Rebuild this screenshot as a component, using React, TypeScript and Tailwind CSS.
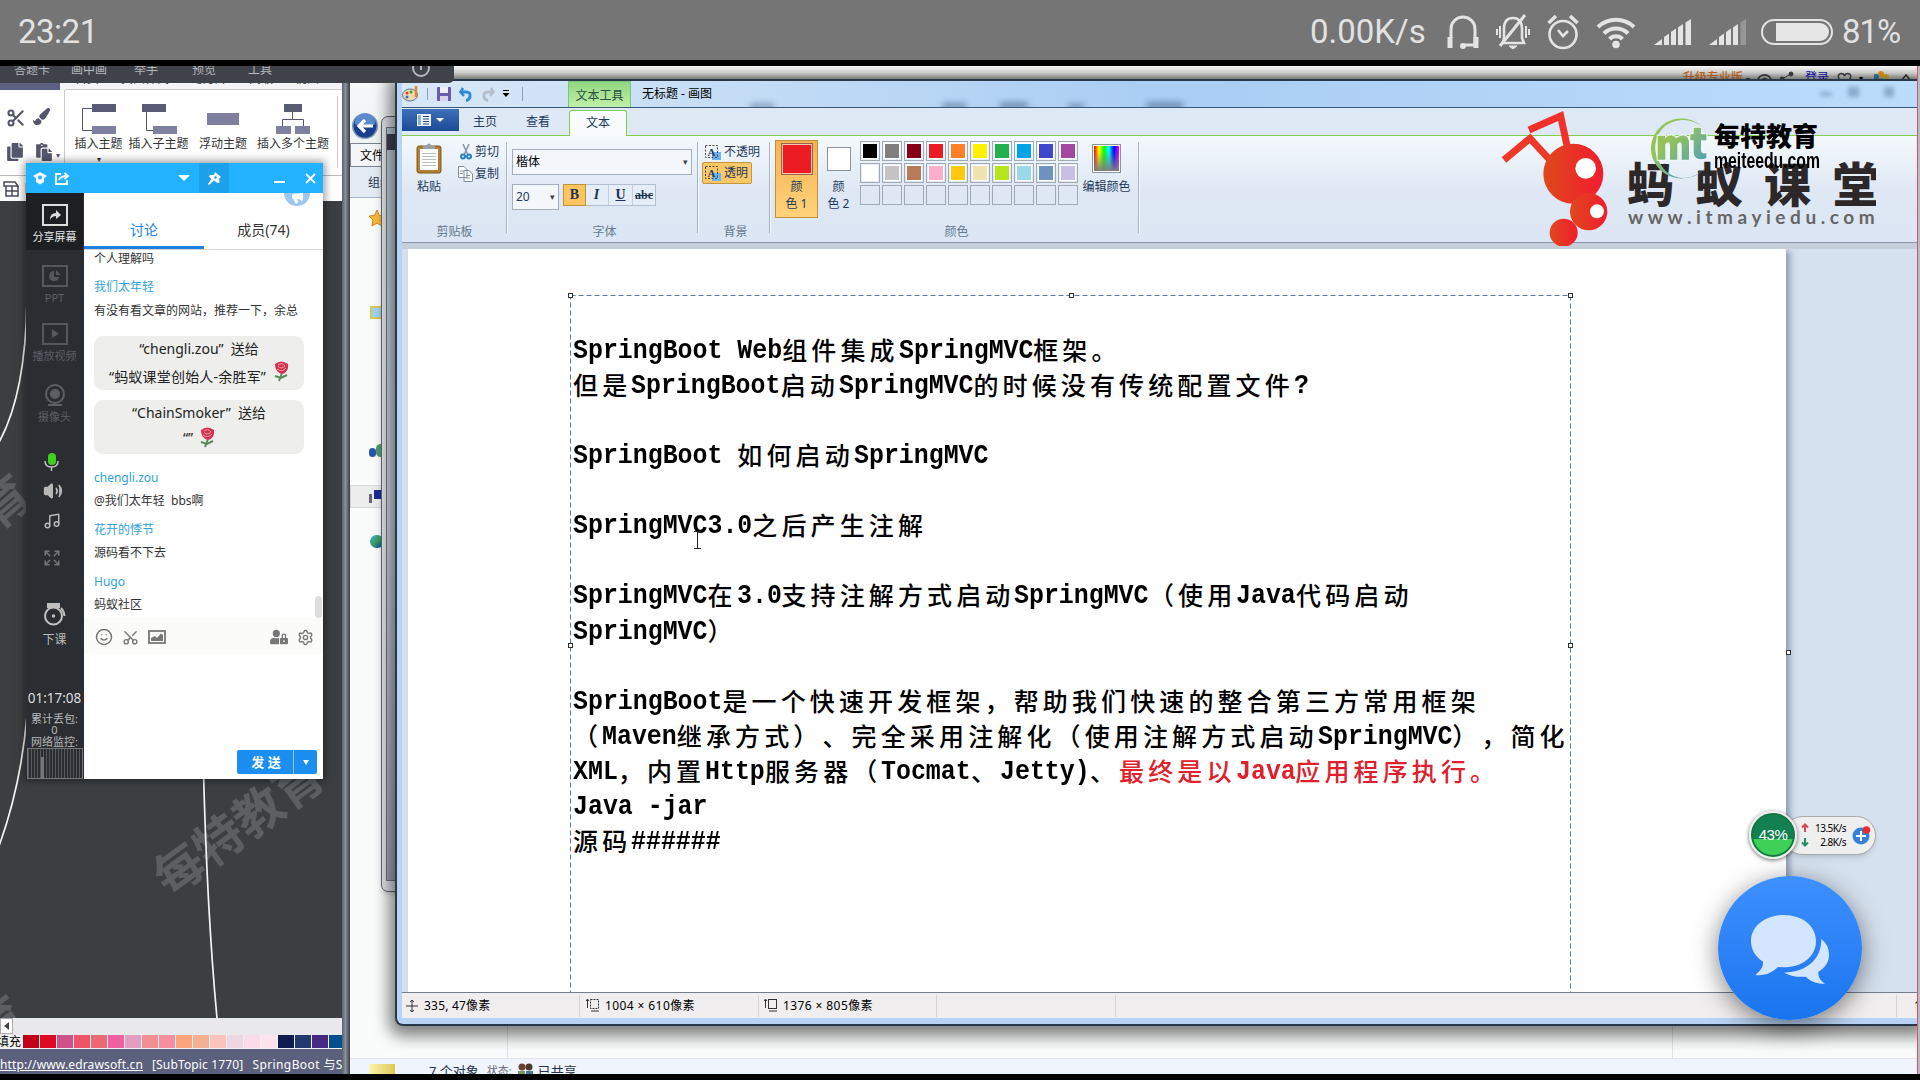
import React from "react";
import {
  Scissors, Smile, Image as ImageIcon, Settings, Volume2, Music, Expand, Megaphone,
} from "lucide-react";
import { FaPaintBrush, FaCopy, FaPaste, FaUserLock } from "react-icons/fa";

const SANS = "font-['Noto_Sans','Noto_Sans_CJK_SC',sans-serif]";

/* ---------- phone status bar ---------- */

function Signal({ dim }: { dim?: boolean }) {
  return (
    <svg width="37" height="26" viewBox="0 0 37 26" fill="#e4e4e4">
      <path d="M0 26 L8 20 V26Z" />
      <path d="M10 18 L15 14.500 V26 H10Z" />
      <path d="M17 13 L22 9.500 V26 H17Z" />
      <path d="M24 8.500 L29 5 V26 H24Z" />
      <path d="M31.500 3.500 L37 0 V26 H31.500Z" opacity={dim ? 0.3 : 1} />
    </svg>
  );
}

function StatusBar() {
  return (
    <div className="flex h-[60px] w-full items-center justify-between bg-[#757575] pl-[18px] pr-[19px] pt-[3px] font-['Roboto',sans-serif] text-[33px] font-normal text-[#e2e2e2]">
      <span className="w-[80px] whitespace-nowrap tracking-[-0.5px]">23:21</span>
      <div className="flex items-center">
        <span className="w-[120px] whitespace-nowrap">0.00K/s</span>
        <svg className="ml-[17px]" width="32" height="36" viewBox="0 0 32 36" fill="none" stroke="#e4e4e4" strokeWidth="3">
          <path d="M4 24 V15 A12 12 0 0 1 28 15 V31 H17" />
          <path d="M3 23 V34 M29 23 V34" strokeWidth="5" />
          <circle cx="16" cy="32" r="1.500" />
        </svg>
        <svg className="ml-[17px]" width="34" height="38" viewBox="0 0 34 38" fill="none" stroke="#e4e4e4" strokeWidth="2.600">
          <path d="M7 30 H28 L26 25 V16 C26 9 23 5 17 5 C11 5 8 9 8 16 V25 Z" />
          <path d="M29 2 L4 33" strokeWidth="3" />
          <path d="M4 13 V25 M30 13 V25 M1 16 V22 M33 16 V22" strokeWidth="2" />
          <path d="M13 33 H21 L17 36Z" fill="#e4e4e4" strokeWidth="1" />
        </svg>
        <svg className="ml-[17px]" width="32" height="38" viewBox="0 0 32 38" fill="none" stroke="#e4e4e4" strokeWidth="2.600">
          <circle cx="16" cy="21.500" r="13.500" />
          <path d="M11 17 L16 23 L21 18" />
          <path d="M1.500 10 L9 3 M30.500 10 L23 3" strokeWidth="3.600" />
        </svg>
        <svg className="ml-[17px]" width="40" height="34" viewBox="0 0 40 34" fill="none" stroke="#e4e4e4" strokeWidth="4">
          <path d="M2 12 A26 26 0 0 1 38 12" />
          <path d="M8 18.500 A17 17 0 0 1 32 18.500" />
          <path d="M13.500 24 A9 9 0 0 1 26.500 24" />
          <circle cx="20" cy="29.500" r="1.800" />
        </svg>
        <div className="ml-[18px]"><Signal /></div>
        <div className="ml-[18px]"><Signal dim /></div>
        <div className="ml-[15px] flex h-[26px] w-[72px] items-center justify-end rounded-full border-2 border-[#e4e4e4] pr-[2px]">
          <div className="h-[18px] w-[53px] rounded-r-full bg-[#e6e6e6]" />
        </div>
        <span className="ml-[9px] w-[59px] whitespace-nowrap tracking-[-1px]">81%</span>
      </div>
    </div>
  );
}

/* ---------- mind-map editor ---------- */

function TopicIcon({ kind }: { kind: number }) {
  return (
    <svg width="36" height="32" viewBox="0 0 36 32">
      <g stroke="#55566c" fill="none">
        {kind === 0 && <path d="M11 5.500 H1.500 V27.500 H11" />}
        {kind === 1 && <path d="M5.500 8 V27.500 H14" />}
        {kind === 3 && <path d="M17.500 9 V16.500 M7.500 23 V16.500 H28.500 V23" />}
      </g>
      {kind === 0 && <><rect x="11" y="1" width="24" height="8" fill="#5a5b75" /><rect x="11" y="23" width="24" height="8" fill="#7f80a0" /></>}
      {kind === 1 && <><rect x="1" y="1" width="24" height="8" fill="#5a5b75" /><rect x="12" y="23" width="24" height="8" fill="#7f80a0" /></>}
      {kind === 2 && <rect x="2" y="10" width="32" height="12" fill="#7f80a0" />}
      {kind === 3 && <><rect x="9" y="1" width="18" height="8" fill="#5a5b75" /><rect x="1" y="23" width="15" height="8" fill="#7f80a0" /><rect x="20" y="23" width="15" height="8" fill="#7f80a0" /></>}
    </svg>
  );
}

const PALETTE = ["#c00018", "#dc0a24", "#d0508a", "#ee5468", "#ec6874", "#ee60a0", "#e49cc0", "#f09094", "#f48ea0", "#fca47c", "#f4b090", "#fac4bc", "#f0d6e2", "#fadce8", "#fde4ec"];
const PALETTE_DARK = ["#0e1c50", "#223a6e", "#482880", "#04508e"];

function EdrawWindow() {
  const topics: [string, string][] = [["插入主题", "w-[53px]"], ["插入子主题", "w-[67px]"], ["浮动主题", "w-[62px]"], ["插入多个主题", "w-[78px]"]];
  return (
    <div className={`absolute left-0 top-0 flex h-[1008px] w-[350px] border-r-[1px] border-[#444] text-[12px] ${SANS}`}>
      <div className="flex w-[342px] flex-col overflow-hidden">
        <div className="flex h-[24px] items-end bg-[#f4f4f8]">
          <div className="h-[8px] w-[60px] bg-[#5c5f80]" />
          <div className="ml-[5px] flex h-[24px] flex-1 items-end gap-[22px] overflow-hidden border-b border-[#ccc] pl-[10px] leading-[19px] text-[#333]">
            <span className="h-[20px]">首页</span><span className="h-[20px]">页面样式</span><span className="h-[20px]">幻灯片</span><span className="h-[20px]">高级</span><span className="h-[20px]">视图</span>
          </div>
        </div>
        <div className="flex h-[86px] shrink-0 border-b border-[#bbb] bg-white">
          <div className="grid w-[65px] grid-cols-2 content-center gap-y-[15px] border-r border-[#ccc] pl-[6px] pt-[4px] text-[#55566c]">
            <Scissors size={20} strokeWidth={2.500} />
            <FaPaintBrush size={17} className="ml-[-2px]" />
            <FaCopy size={18} />
            <div className="flex items-end"><FaPaste size={18} /><span className="ml-[3px] text-[8px]">▾</span></div>
          </div>
          <div className="flex h-[60px] items-start pl-[7px] pt-[13px] text-[#333]">
            {topics.map(([t, w], i) => (
              <div key={t} className={`${w} flex flex-col items-center whitespace-nowrap`}>
                <TopicIcon kind={i} />
                <span className="mt-[1px] leading-[16px]">{t}</span>
                {i === 0 && <span className="mt-[3px] text-[8px] leading-[8px]">▾</span>}
              </div>
            ))}
          </div>
          <div className="ml-auto mt-[6px] h-[72px] w-px bg-[#ccc]" />
          <div className="w-[4px]" />
        </div>
        <div className="flex h-[25px] items-center gap-[5px] bg-white pl-[3px]">
          <svg width="16" height="16" viewBox="0 0 16 16" fill="none" stroke="#4a4b5c" strokeWidth="1.500"><path d="M1 1 H12 L15 5 H1Z M3 5 V15 H15 V5 M3 10 H15 M9 5 V15" /></svg>
          <span>目录</span>
        </div>
        <div className="relative h-[817px] overflow-hidden bg-[#3b3f42]">
          <div className="absolute left-[140px] top-[596px] origin-center -rotate-[36deg] whitespace-nowrap text-[49px] font-bold leading-[56px] text-[#85878a]/45">每特教育</div>
          <div className="absolute left-[-150px] top-[319px] origin-center -rotate-[40deg] whitespace-nowrap text-[49px] font-bold leading-[56px] text-[#85878a]/45">每特教育</div>
          <div className="absolute left-[-158px] top-[836px] -rotate-[36deg] whitespace-nowrap text-[49px] font-bold leading-[56px] text-[#85878a]/45">每特教育</div>
          <svg className="absolute left-0 top-0" width="342" height="817" fill="none" stroke="#f4f4f4" strokeWidth="1.700">
            <path d="M27 100 C26 160 17 210 -2 243" />
            <path d="M27 515 C23 560 14 604 -1 645" />
            <path d="M202 500 Q205 690 217 817" />
          </svg>
        </div>
        <div className="flex h-[17px] bg-[#e9e9ec]"><div className="flex h-[16px] w-[13px] items-center justify-center border border-[#aaa] bg-white"><span className="border-y-[4px] border-r-[5px] border-y-transparent border-r-[#444]" /></div></div>
        <div className="flex h-[14px] bg-[#f0f0f2]">
          <span className="w-[23px] -translate-x-[3px] whitespace-nowrap leading-[14px]">填充</span>
          {PALETTE.map((c) => <div key={c} className="h-[13px] w-[16px] shrink-0 mr-px" style={{ background: c }} />)}
          {PALETTE_DARK.map((c) => <div key={c} className="h-[13px] w-[16px] shrink-0 mr-px" style={{ background: c }} />)}
        </div>
        <div className="flex h-[25px] items-center gap-[9px] whitespace-pre bg-[#5c607c] pt-[6px] text-[12px] tracking-[0.15px] text-white">
          <span className="underline">http://www.edrawsoft.cn</span><span>[SubTopic 1770]</span><span className="tracking-[0.4px]">SpringBoot 与S</span>
        </div>
      </div>
      <div className="flex-1 bg-gradient-to-r from-[#5a606c] via-[#8a919e] to-[#4b505a]" />
    </div>
  );
}

/* ---------- explorer windows in the background ---------- */

function Explorer() {
  return (
    <div className={`absolute left-[342px] top-[16px] h-[992px] w-[1578px] bg-[#fafcfb] text-[12px] ${SANS}`}>
      <div className="flex h-full flex-col">
        <div className="flex h-[61px] items-center border-l-[8px] border-[#7c8490] bg-gradient-to-b from-[#f6f8fa] to-[#eef4f2] pl-[1px] pt-[26px]">
          <svg width="28" height="28" viewBox="0 0 28 28">
            <circle cx="14" cy="14" r="13" fill="#7e95b8" /><circle cx="14" cy="14" r="11.500" fill="#1b3f8f" /><path d="M3.500 12 A10.500 10.500 0 0 1 24.500 12 Q14 18 3.500 12" fill="#5a8ad0" />
            <path d="M22 14 H8 M14 8 L8 14 L14 20" stroke="#fff" strokeWidth="3.200" fill="none" />
          </svg>
        </div>
        <div className="ml-[8px] h-[24px] border border-[#7c8490] bg-[#f4f5f8] pl-[9px] leading-[24px]">文件</div>
        <div className="ml-[8px] h-[31px] border-b border-[#a9b8cc] bg-[#e4ebf5] pl-[18px] leading-[31px] text-[#1e3050]">组织</div>
        <div className="ml-[8px] flex flex-1 flex-col">
          <svg className="ml-[18px] mt-[11px]" width="18" height="18" viewBox="0 0 18 18"><path d="M9 1 L11.500 6.500 L17 7 L13 11 L14 17 L9 14 L4 17 L5 11 L1 7 L6.500 6.500Z" fill="#fbb83a" stroke="#d8821c" /></svg>
          <div className="ml-[20px] mt-[79px] h-[13px] w-[16px] border-2 border-[#d8c860] bg-[#9fd4ee]" />
          <div className="ml-[19px] mt-[125px] flex"><div className="h-[9px] w-[7px] self-end rounded-full bg-[#2b54b0]" /><div className="h-[13px] w-[9px] rounded-full bg-[#4f9a70]" /></div>
          <div className="mt-[28px] flex h-[23px] gap-[2px] border border-[#d8d8d8] bg-[#ededed] pl-[18px] pt-[4px]"><div className="mt-[4px] h-[9px] w-[3px] bg-[#667]" /><div className="h-[9px] w-[12px] bg-[#1c2c9c]" /></div>
          <div className="ml-[20px] mt-[27px] h-[13px] w-[14px] rounded-full bg-gradient-to-br from-[#48b0d0] via-[#3a9a60] to-[#1c2cb0]" />
          <div className="mt-auto flex h-[32px] justify-between pl-[157px] pr-[247px]"><div className="w-px bg-[#dde2ee]" /><div className="w-px bg-[#dde2ee]" /></div>
        </div>
        <div className="flex h-[16px] items-start overflow-hidden border-t border-[#dfe4ee] bg-[#f0f4fc] pl-[27px] text-[13px] leading-[24px] text-[#25324a]">
          <div className="mt-[5px] h-[20px] w-[26px] bg-gradient-to-r from-[#fbf3b0] to-[#e0c850]" />
          <span className="ml-[34px]">7 个对象</span><span className="ml-[8px] text-[11px] text-[#667]">状态:</span>
          <svg className="ml-[6px] mt-[4px]" width="15" height="14"><circle cx="4" cy="4" r="3.500" fill="#6b4030" /><circle cx="11" cy="4" r="3.500" fill="#503828" /><rect x="0" y="8" width="7" height="6" fill="#789860" /><rect x="8" y="8" width="7" height="6" fill="#4c7c90" /></svg>
          <span className="ml-[5px]">已共享</span>
        </div>
      </div>
      <div className="absolute left-[39px] top-[34px] h-[776px] w-[20px] rounded-l-[7px] border border-[#666] bg-[#e2e6ec] pl-[4px] pt-[10px] shadow-md">
        <div className="flex h-[754px] w-full flex-col border border-[#777] bg-gradient-to-b from-[#c4d4dc] via-[#d4dce4] to-[#a8aab4]"><div className="mt-[6px] h-[16px] w-full bg-[#445]" /></div>
      </div>
    </div>
  );
}

/* ---------- Paint ---------- */

const LATIN_PITCH = 14.94;
const LINES: { t: string; red?: string }[] = [
  { t: "SpringBoot Web组件集成SpringMVC框架。" },
  { t: "但是SpringBoot启动SpringMVC的时候没有传统配置文件?" },
  { t: "" },
  { t: "SpringBoot 如何启动SpringMVC" },
  { t: "" },
  { t: "SpringMVC3.0之后产生注解" },
  { t: "" },
  { t: "SpringMVC在3.0支持注解方式启动SpringMVC（使用Java代码启动" },
  { t: "SpringMVC）" },
  { t: "" },
  { t: "SpringBoot是一个快速开发框架，帮助我们快速的整合第三方常用框架" },
  { t: "（Maven继承方式）、完全采用注解化（使用注解方式启动SpringMVC），简化" },
  { t: "XML，内置Http服务器（Tocmat、Jetty)、", red: "最终是以Java应用程序执行。" },
  { t: "Java -jar" },
  { t: "源码######" },
];

function Runs({ text }: { text: string }) {
  const parts = text.match(/[\x00-\x7f]+|[^\x00-\x7f]+/g) ?? [];
  return (
    <>
      {parts.map((p, i) =>
        p.charCodeAt(0) < 128 ? (
          <span key={i} className="inline-block h-[35px] translate-y-[1px] leading-[35px]" style={{ width: p.length * LATIN_PITCH }}>
            <span className="inline-block origin-left scale-x-[0.8893] whitespace-pre font-['Liberation_Mono',monospace] text-[28px] font-bold">{p}</span>
          </span>
        ) : (
          <span key={i} className="inline-block h-[35px] font-['Noto_Sans_CJK_SC',sans-serif] text-[25px] font-medium leading-[34px] tracking-[4.130px] [font-kerning:none] [text-spacing-trim:space-all]">{p}</span>
        ),
      )}
    </>
  );
}

const ROW1 = ["#000000", "#7f7f7f", "#880015", "#ed1c24", "#ff7f27", "#fff200", "#22b14c", "#00a2e8", "#3f48cc", "#a349a4"];
const ROW2 = ["#ffffff", "#c3c3c3", "#b97a57", "#ffaec9", "#ffc90e", "#efe4b0", "#b5e61d", "#99d9ea", "#7092be", "#c8bfe7"];

function BgIcon() {
  return (
    <svg width="16" height="15" viewBox="0 0 16 15">
      <rect x="7" y="7" width="9" height="8" fill="#6fb2f0" />
      <rect x="0.500" y="0.500" width="12" height="12" fill="none" stroke="#445" strokeDasharray="2 1.500" />
      <text x="2.500" y="11" fontSize="11" fontWeight="bold" fontFamily="Liberation Serif" fill="#1f3c66">A</text>
    </svg>
  );
}

function Group({ label, className, children }: { label: string; className: string; children: React.ReactNode }) {
  return (
    <div className={`flex h-[91px] flex-col justify-between border-r border-[#a5b4c6] shadow-[1px_0_0_#f6f9fd] ${className}`}>
      <div className="flex h-[79px]">{children}</div>
      <div className="-mb-[5px] text-center leading-[12px] text-[#66788e]">{label}</div>
    </div>
  );
}

function Ribbon() {
  return (
    <div className="flex h-[107px] border-b border-[#8a97a8] bg-gradient-to-b from-[#f4f9fc] via-[#dfe8f4] to-[#dce6f4] pt-[6px] text-[12px] text-[#1e395b]">
      <Group label="剪贴板" className="w-[105px] pl-[1px]">
        <div className="flex w-[52px] flex-col items-center pt-[1px]">
          <svg width="26" height="31" viewBox="0 0 26 31"><rect x="1" y="3" width="24" height="27" rx="2" fill="#b47f34" stroke="#7e5820" /><rect x="4" y="6" width="18" height="21" fill="#fff" /><path d="M6 10.500H20M6 13.500H20M6 16.500H20M6 19.500H20M6 22.500H20" stroke="#b9bdc6" /><path d="M7 6 V3 H10 Q13 -2 16 3 H19 V6Z" fill="#9a9fa6" /></svg>
          <span className="mt-[5px] leading-[16px]">粘贴</span>
        </div>
        <div className="flex flex-col gap-[6px] pl-[3px] pt-[2px]">
          <div className="flex h-[16px] items-center gap-[3px]"><svg className="ml-[2px]" width="12" height="16" viewBox="0 0 12 16" fill="none"><path d="M3 0 L7.500 10 M9 0 L4.500 10" stroke="#8795a8" strokeWidth="1.500" /><circle cx="3" cy="12.500" r="2" stroke="#2a7fc0" strokeWidth="2" /><circle cx="9" cy="12.500" r="2" stroke="#2a7fc0" strokeWidth="2" /></svg><span>剪切</span></div>
          <div className="flex h-[16px] items-center gap-[2px]"><svg width="15" height="16" viewBox="0 0 15 16" fill="#fff" stroke="#8090a4"><path d="M.5.5H6L9 3.500V11.500H.5Z M6 4.500H11L14.500 8V15.500H6Z M2 5H6M2 7.500H5M8 9.500H12M8 12H12" /></svg><span>复制</span></div>
        </div>
      </Group>
      <Group label="字体" className="w-[191px] pl-[5px]">
        <div className="flex flex-col pt-[7px]">
          <div className="flex h-[26px] w-[180px] items-center justify-between border border-[#a4aebc] bg-[#f3f7fc] px-[3px] text-black"><span>楷体</span><span className="text-[9px] text-[#444]">▾</span></div>
          <div className="mt-[9px] flex">
            <div className="flex h-[26px] w-[47px] items-center justify-between border border-[#a4aebc] bg-[#f3f7fc] px-[3px] text-[12px]"><span>20</span><span className="text-[9px] text-[#444]">▾</span></div>
            <div className="ml-[4px] flex h-[22px] border border-[#b2c0d2] bg-[#e4edf8] font-['Liberation_Serif',serif] text-[14px] font-bold leading-[20px] text-[#1e3450]">
              <span className="-m-px h-[22px] w-[23px] border border-[#c2923a] bg-[#fcc55e] text-center">B</span>
              <span className="w-[24px] border-r border-[#c3cfde] text-center italic">I</span>
              <span className="w-[24px] border-r border-[#c3cfde] text-center underline">U</span>
              <span className="w-[22px] text-center text-[12px] line-through">abc</span>
            </div>
          </div>
        </div>
      </Group>
      <Group label="背景" className="w-[72px] pl-[4px]">
        <div className="flex flex-col">
          <div className="flex h-[20px] items-center gap-[3px] pl-[3px] whitespace-nowrap"><BgIcon /><span>不透明</span></div>
          <div className="flex h-[22px] w-[50px] items-center gap-[3px] rounded-[2px] border border-[#c8963c] bg-[#fbc867] pl-[2px] whitespace-nowrap"><BgIcon /><span>透明</span></div>
        </div>
      </Group>
      <Group label="颜色" className="w-[369px] pl-[5px]">
        <div className="-mt-[2px] flex h-[78px] w-[43px] flex-col items-center border border-[#c2903a] bg-gradient-to-b from-[#f5b352] to-[#ffd27a] pt-[2px] text-center leading-[17px]">
          <div className="h-[32px] w-[32px] border border-[#a06050] bg-[#ed1c24] shadow-[inset_0_0_0_1px_#f4c8b0]" />
          <span className="mt-[3px]">颜<br />色 1</span>
        </div>
        <div className="flex w-[41px] flex-col items-center pt-[5px] text-center leading-[17px]">
          <div className="h-[24px] w-[24px] border border-[#8a93a0] bg-white" />
          <span className="mt-[7px]">颜<br />色 2</span>
        </div>
        <div className="grid h-[64px] grid-cols-[repeat(10,20px)] gap-[2px] pl-[1px] -mt-[1px]">
          {[...ROW1, ...ROW2, ...Array(10).fill("")].map((c, i) => (
            <div key={i} className="h-[20px] w-[20px] border border-[#a0a9b6] p-[1px]">
              {c && <div className="h-full w-full border border-white" style={{ background: c }} />}
            </div>
          ))}
        </div>
        <div className="flex w-[56px] flex-col items-center pl-[1px] pt-[2px]">
          <div className="h-[29px] w-[29px] border border-[#8a93a0] bg-white p-[1px]">
            <div className="h-full w-full bg-[linear-gradient(to_bottom,transparent_20%,#7f7f7f),linear-gradient(to_right,#f00,#ff0,#0f0,#0ff,#00f,#f0f)]" />
          </div>
          <span className="mt-[6px] whitespace-nowrap leading-[16px]">编辑颜色</span>
        </div>
      </Group>
    </div>
  );
}

function Handle({ className }: { className: string }) {
  return <div className={`absolute h-[5px] w-[5px] border border-[#333] bg-white ${className}`} />;
}

function Logos() {
  return (
    <div className="absolute left-[1099px] top-[22px] h-[146px] w-[385px]">
      <svg className="absolute left-0 top-0" width="385" height="143" viewBox="108 129 1155 429">
        <defs>
          <linearGradient id="ant" x1="0" x2="1"><stop offset="0" stopColor="#e0481c" /><stop offset="1" stopColor="#f01c30" /></linearGradient>
          <linearGradient id="mt" gradientUnits="userSpaceOnUse" x1="590" y1="190" x2="720" y2="340"><stop offset=".35" stopColor="#94c35c" /><stop offset="1" stopColor="#4a9cc4" /></linearGradient>
        </defs>
        <path d="M132 300 L210 235 L268 298" fill="none" stroke="#f0382a" strokeWidth="21" />
        <path d="M207 210 L302 168 L322 262" fill="none" stroke="#f0302a" strokeWidth="21" />
        <circle cx="340" cy="341" r="90" fill="url(#ant)" /><circle cx="377" cy="325" r="31" fill="#fff" />
        <circle cx="386" cy="455" r="56" fill="url(#ant)" /><circle cx="411" cy="454" r="21" fill="#fff" />
        <circle cx="311" cy="518" r="42" fill="url(#ant)" />
      </svg>
      <span className="absolute left-[131px] top-[50px] w-[249px] overflow-hidden whitespace-nowrap font-['Noto_Sans_CJK_SC',sans-serif] text-[47px] font-black leading-[58px] tracking-[21.500px] text-[#2c2728]">蚂蚁课堂</span>
      <span className="absolute left-[132px] top-[102px] whitespace-nowrap font-['Lato',sans-serif] text-[19px] font-bold leading-[24px] tracking-[4.550px] text-[#666]">www.itmayiedu.com</span>
      <svg className="absolute left-[147px] top-[10px]" width="70" height="66" viewBox="550 160 210 198">
        <path d="M742 216 A92 90 0 1 0 738 322 A80 80 0 0 1 604 316 A86 86 0 0 1 620 196 A84 74 0 0 1 742 216Z" fill="url(#mt)" />
        <path d="M594 228 H616 V236 Q636 218 650 236 Q672 218 684 234 Q689 242 688 258 V300 H666 V258 Q664 240 653 254 V300 H631 V258 Q629 240 617 254 V300 H594Z M702 204 H724 V224 H740 V242 H724 V274 Q726 284 740 280 V296 Q702 306 702 278 V242 H692 V224 H702Z" fill="url(#mt)" stroke="#f4f8fc" strokeWidth="6" paintOrder="stroke" />
      </svg>
      <span className="absolute left-[218px] top-[17px] whitespace-nowrap font-['Noto_Sans_CJK_SC',sans-serif] text-[26px] font-black leading-[30px] text-black">每特教育</span>
      <span className="absolute left-[218px] top-[46px] origin-left scale-x-[0.7] whitespace-nowrap font-['Liberation_Sans',sans-serif] text-[22.500px] font-bold leading-[24px] text-black">meiteedu.com</span>
    </div>
  );
}

function PaintWindow() {
  return (
    <div className={`absolute left-[395px] top-[13px] h-[947px] w-[1525px] rounded-bl-[8px] border-l-2 border-t-2 border-b-2 border-[#29374a] bg-[#b9d3f4] pb-[6px] pl-[5px] shadow-[0_4px_16px_6px_rgba(0,0,0,.5)] ${SANS}`}>
      <div className="flex h-full flex-col">
        <div className="relative flex h-[27px] items-center overflow-hidden border-b border-[#3a5878] bg-gradient-to-r from-[#d9e8f7] via-[#a9cdf3] to-[#bcdcfb] text-[12px]">
          <svg width="17" height="16" viewBox="0 0 17 16"><ellipse cx="8" cy="9" rx="7.500" ry="6" fill="#eed9ac" stroke="#5a7aa0" /><circle cx="5" cy="7" r="1.500" fill="#e04030" /><circle cx="9" cy="6" r="1.500" fill="#30a040" /><circle cx="5" cy="11" r="1.500" fill="#3070d0" /><path d="M14 0 V11" stroke="#e08830" strokeWidth="2.500" /></svg>
          <div className="ml-[8px] h-[12px] w-px bg-[#8aa0b8]" />
          <svg className="ml-[9px]" width="14" height="14" viewBox="0 0 14 14"><rect width="14" height="14" rx="1" fill="#6a5cb0" /><rect x="3" width="8" height="6" fill="#f0eefa" /><rect x="3" y="9" width="8" height="5" fill="#d8d4ea" /></svg>
          <svg className="ml-[8px]" width="14" height="15" viewBox="0 0 14 15" fill="none" stroke="#2f8bd8" strokeWidth="3"><path d="M2 5 H7 Q12 5 11 10 Q10 13 7 13.500" /><path d="M4 1 L1.500 5 L5 9" strokeWidth="2.500" /></svg>
          <svg className="ml-[8px]" width="14" height="15" viewBox="0 0 14 15" fill="none" stroke="#b4bfca" strokeWidth="3"><path d="M12 5 H7 Q2 5 3 10 Q4 13 7 13.500" /><path d="M10 1 L12.500 5 L9 9" strokeWidth="2.500" /></svg>
          <svg className="ml-[7px]" width="8" height="8" viewBox="0 0 8 8"><path d="M1 0.500H7" stroke="#000" /><path d="M0.500 3H7.500L4 7Z" /></svg>
          <div className="ml-[12px] h-[14px] w-px bg-[#8aa0b8]" />
          <div className="ml-[45px] h-full w-[63px] border-x border-t border-[#7cc87c] bg-gradient-to-b from-[#92d680] to-[#c0f0a8] pt-[3px] text-center leading-[22px] text-[#2a5040]">文本工具</div>
          <span className="ml-[11px] leading-[24px] text-black">无标题 - 画图</span>
          <svg className="absolute left-[330px] top-[16px] blur-[3px]" width="460" height="12" fill="#4a6a90" opacity=".65"><rect x="210" y="6" width="24" height="8" /><rect x="268" y="5" width="28" height="8" /><rect x="336" y="7" width="16" height="6" /><rect x="415" y="5" width="36" height="8" /><rect x="18" y="7" width="24" height="6" /></svg>
          <svg className="absolute right-[24px] top-[3px] blur-[2px]" width="80" height="16" fill="#6d8cb0" opacity=".6"><rect x="4" y="8" width="12" height="4" /><rect x="32" y="3" width="11" height="10" /><rect x="68" y="3" width="10" height="10" /></svg>
        </div>
        <div className="flex h-[28px] items-end border-b border-[#7fd04c] bg-[#dfe9f6] text-[12px] text-[#1e395b]">
          <div className="mb-[4px] flex h-[22px] w-[57px] items-center justify-center gap-[5px] bg-gradient-to-b from-[#3c70b8] to-[#1c4a98]">
            <svg width="14" height="12" viewBox="0 0 14 12"><rect width="14" height="12" fill="#f2f6fc" /><path d="M6 2.500H12M6 5H12M6 7.500H12M6 10H12" stroke="#1d478f" /><rect x="1" y="1" width="3" height="10" fill="#8fb0dc" /></svg>
            <span className="border-x-[4px] border-t-[4px] border-x-transparent border-t-white" />
          </div>
          <span className="ml-[14px] leading-[26px]">主页</span>
          <span className="ml-[29px] leading-[26px]">查看</span>
          <div className="-mb-px ml-[19px] h-[26px] w-[58px] rounded-t-[3px] border-x border-t border-[#7fd04c] bg-[#f8fcfd] text-center leading-[24px]">文本</div>
        </div>
        <Ribbon />
        <div className="relative flex flex-1 overflow-hidden border-t-[6px] border-[#c5cfdc] bg-[#d6e1ef] pl-[6px]">
          <div className="w-[1378px] bg-white pl-[162px] pt-[44px] shadow-[4px_2px_6px_rgba(90,110,140,.6)]">
            <div className="relative h-[720px] w-[1003px] pl-[3px] pt-[39px] text-black">
              <svg className="absolute left-0 top-0" width="1003" height="720"><rect x="0.500" y="2.500" width="1000" height="730" fill="none" stroke="#5478b0" strokeDasharray="5 3" /></svg>
              <Handle className="left-[-2px] top-0" /><Handle className="left-[499px] top-0" /><Handle className="left-[998px] top-0" />
              <Handle className="left-[-2px] top-[350px]" /><Handle className="left-[998px] top-[350px]" /><Handle className="left-[1216px] top-[357px]" />
              {LINES.map((l, i) => (
                <div key={i} className="flex h-[35.070px] whitespace-nowrap">
                  <Runs text={l.t} />
                  {l.red && <span className="flex text-[#e0202c]"><Runs text={l.red} /></span>}
                </div>
              ))}
              <svg className="absolute left-[123px] top-[238px]" width="9" height="18" stroke="#222" fill="none"><path d="M1 .5H8M4.500 1V17M1 17.500H8" /></svg>
            </div>
          </div>
        </div>
        <div className="flex h-[26px] shrink-0 items-center border-t border-[#767e8a] bg-[#f0eeee] text-[12px] text-black">
          <div className="flex h-[22px] w-[178px] items-center border-r border-[#d4d4d8] pl-[4px]">
            <svg width="12" height="12" stroke="#333" fill="none"><path d="M6 0V12M0 6H12M4 2L6 0L8 2M4 10L6 12L8 10" /></svg><span className="ml-[6px] tracking-[0.2px]">335, 47像素</span>
          </div>
          <div className="flex h-[22px] w-[179px] items-center border-r border-[#d4d4d8] pl-[6px]">
            <svg width="14" height="13" stroke="#333" fill="none"><path d="M1.500 1V9M0 2L1.500 0L3 2" /><rect x="4.500" y=".5" width="8" height="9" strokeDasharray="2 1" /><path d="M5 12H13" /></svg><span className="ml-[5px] tracking-[0.400px]">1004 × 610像素</span>
          </div>
          <div className="flex h-[22px] w-[178px] items-center border-r border-[#d4d4d8] pl-[5px]">
            <svg width="14" height="13" stroke="#333" fill="none"><path d="M1.500 1V9M0 2L1.500 0L3 2" /><rect x="4.500" y=".5" width="8" height="9" /><path d="M5 12H13" /></svg><span className="ml-[5px] tracking-[0.400px]">1376 × 805像素</span>
          </div>
          <div className="h-[22px] w-[179px] border-r border-[#d4d4d8]" />
          <div className="ml-auto flex h-[22px] w-[24px] items-center border-l border-[#d4d4d8] pl-[17px]">1</div>
        </div>
      </div>
      <Logos />
    </div>
  );
}

/* ---------- live class chat ---------- */

function Rose() {
  return (
    <svg width="15" height="21" viewBox="0 0 15 21"><path d="M1 15 L7 17 L13 14 M8 12 L5 20" stroke="#5a8a5a" strokeWidth="2" fill="none" /><path d="M1 3 Q7 -2 14 3 Q15 11 8 13 Q1 11 1 3Z" fill="#d8304c" /><path d="M4 4 Q8 1 11 5 Q7 9 4 5 M3 8 Q8 12 12 7" stroke="#f4a0ac" fill="none" /></svg>
  );
}

function SideItem({ label, active, className, children }: { label: string; active?: boolean; className: string; children: React.ReactNode }) {
  return (
    <div className={`flex flex-col items-center whitespace-nowrap text-[11px] leading-[14px] ${active ? "text-[#e8e8e8]" : "text-[#5c5f64]"} ${className}`}>
      {children}
      <span className="mt-[4px]">{label}</span>
    </div>
  );
}

function ChatWindow() {
  return (
    <div className={`absolute left-[26px] top-[97px] flex h-[616px] w-[297px] flex-col shadow-[0_0_8px_2px_rgba(0,0,0,.4)] ${SANS}`}>
      <div className="flex h-[30px] items-center bg-[#22b2ff] text-white">
        <svg className="ml-[7px]" width="14" height="14" viewBox="0 0 14 14" fill="#fff"><path d="M0 5 L7 1 L14 5 L11 7 V11 L7 13.500 L3 11 V7Z" /><circle cx="7" cy="6.500" r="2" fill="#22b2ff" /></svg>
        <svg className="ml-[8px]" width="15" height="13" viewBox="0 0 15 13" fill="none" stroke="#fff" strokeWidth="1.800"><path d="M6 2H1V12H12V8M4 8Q5 4 13 4M9.500 1L13 4L9.500 7" /></svg>
        <span className="ml-[108px] border-x-[6px] border-t-[6px] border-x-transparent border-t-white" />
        <div className="ml-[9px] flex h-full w-[30px] items-center justify-center bg-[#1ca2ea]">
          <svg width="15" height="15" viewBox="0 0 15 15"><path d="M8 1 L14 6 L12 7.500 L12.500 11.500 L10.500 12 L7 9.500 L2 14 L1 13 L4.500 8 L2 5.500 L3 4 L7 4Z" fill="#fff" /><circle cx="8.500" cy="6.500" r="1.200" fill="#1ca2ea" /></svg>
        </div>
        <span className="ml-[45px] mt-[8px] h-[2px] w-[11px] bg-white" />
        <svg className="ml-[20px]" width="11" height="11" stroke="#fff" strokeWidth="1.800"><path d="M1 1L10 10M10 1L1 10" /></svg>
      </div>
      <div className="flex flex-1">
        <div className="flex w-[58px] flex-col items-center bg-[#2a2d32] pr-[1px] text-[#b8b8b8]">
          <SideItem label="分享屏幕" active className="h-[57px] w-full bg-[#1d1f22] pt-[11px]">
            <svg width="26" height="22" viewBox="0 0 26 22"><rect x="1" y="1" width="24" height="20" fill="none" stroke="#ddd" strokeWidth="2" /><path d="M8 16 Q8 9 14 9 V6 L19 11 L14 15 V12 Q10 12 8 16Z" fill="#ddd" /></svg>
          </SideItem>
          <SideItem label="PPT" className="h-[58px] pt-[15px]">
            <svg width="26" height="22" viewBox="0 0 26 22"><rect x="1" y="1" width="24" height="20" fill="none" stroke="#54575c" strokeWidth="2" /><path d="M12 6 A5 5 0 1 0 17 12 H12Z M14 5 V10 H19Z" fill="#54575c" /></svg>
          </SideItem>
          <SideItem label="播放视频" className="h-[61px] pt-[15px]">
            <svg width="26" height="22" viewBox="0 0 26 22"><rect x="1" y="1" width="24" height="20" fill="none" stroke="#54575c" strokeWidth="2" /><path d="M10 6 L17 11 L10 15Z" fill="#54575c" /></svg>
          </SideItem>
          <SideItem label="摄像头" className="h-[83px] pt-[15px]">
            <svg width="22" height="22" viewBox="0 0 22 22" fill="none" stroke="#5c5f64" strokeWidth="2"><circle cx="11" cy="10" r="9" /><circle cx="11" cy="10" r="4" fill="#5c5f64" /><path d="M4 21H18" /></svg>
          </SideItem>
          <svg className="mr-[6px]" width="15" height="19" viewBox="0 0 15 19" fill="none"><rect x="4" y="1" width="8" height="12" rx="4" fill="#3fd01c" /><path d="M1 9 Q1 15 7.500 15 Q14 15 14 9 M7.500 15V19" stroke="#c0c0c0" strokeWidth="1.500" /></svg>
          <Volume2 className="mr-[4px] mt-[10px]" size={20} fill="#b8b8b8" />
          <Music className="mr-[5px] mt-[11px]" size={18} />
          <Expand className="mr-[5px] mt-[19px] text-[#777]" size={18} />
          <div className="mt-[36px] flex flex-col items-center text-[12px]">
            <svg width="23" height="23" viewBox="0 0 23 23" fill="none" stroke="#c0c0c0" strokeWidth="2"><circle cx="10.500" cy="13" r="8.500" /><path d="M5 1H16V4H5Z" fill="#c0c0c0" /><circle cx="10.500" cy="13" r=".8" /><path d="M18 5 Q21 8 21.500 13" /></svg>
            <span className="mt-[5px] leading-[18px]">下课</span>
          </div>
          <span className="mt-[40px] text-[13.500px] leading-[18px] text-[#ddd]">01:17:08</span>
          <span className="mt-[5px] text-[11px] leading-[13px]">累计丢包:</span>
          <span className="text-[11px] leading-[10px]">0</span>
          <span className="text-[11px] leading-[13px]">网络监控:</span>
          <div className="mt-auto h-[31px] w-[56px] border border-[#777] bg-[repeating-linear-gradient(to_right,#55585c_0_1px,#2a2d32_1px_3px)] pl-[13px] pt-[8px]"><div className="h-full w-[3px] bg-[#777]" /></div>
        </div>
        <div className="flex flex-1 flex-col bg-white text-[12px] text-[#333]">
          <div className="relative flex h-[57px] shrink-0 border-b border-[#d4d4d4] text-[14px] leading-[73px]">
            <div className="w-[120px] border-b-[3px] border-[#1c82e0] text-center text-[#1c82e0]">讨论</div>
            <div className="w-[119px] text-center">成员(74)</div>
            <div className="absolute left-[200px] top-0 flex h-[13px] w-[26px] justify-center overflow-hidden rounded-b-full bg-[#9cc8f0] text-white"><Megaphone size={13} fill="#fff" className="-mt-[2px]" /></div>
          </div>
          <div className="relative flex h-[368px] flex-col pl-[10px] pr-[19px] leading-[16px]">
            <span className="mt-[1px]">个人理解吗</span>
            <span className="mt-[12px] text-[#2fa4dc]">我们太年轻</span>
            <span className="mt-[8px] whitespace-nowrap">有没有看文章的网站，推荐一下，余总</span>
            <div className="mt-[17px] flex h-[54px] shrink-0 flex-col rounded-[9px] bg-[#eeefed] text-center text-[14px] text-[#222]">
              <span className="leading-[25px]">“chengli.zou”&nbsp; 送给</span>
              <span className="flex items-center justify-center gap-[8px] whitespace-nowrap leading-[32px] tracking-[0.200px]">“蚂蚁课堂创始人-余胜军”<span className="-mt-[12px]"><Rose /></span></span>
            </div>
            <div className="mt-[10px] flex h-[54px] shrink-0 flex-col rounded-[9px] bg-[#eeefed] text-center text-[14px] text-[#222]">
              <span className="leading-[25px]">“ChainSmoker”&nbsp; 送给</span>
              <span className="flex items-center justify-center gap-[7px] leading-[25px]">“”<Rose /></span>
            </div>
            <span className="mt-[16px] text-[#2fa4dc]">chengli.zou</span>
            <span className="mt-[7px] whitespace-pre">@我们太年轻  bbs啊</span>
            <span className="mt-[13px] text-[#2fa4dc]">花开的悸节</span>
            <span className="mt-[7px]">源码看不下去</span>
            <span className="mt-[13px] text-[#2fa4dc]">Hugo</span>
            <span className="mt-[7px]">蚂蚁社区</span>
            <div className="absolute bottom-0 right-[1px] h-[22px] w-[7px] rounded bg-[#ddd]" />
          </div>
          <div className="flex h-[36px] items-center gap-[9px] bg-[#fbfbfa] pl-[11px] pr-[9px] pt-[2px] text-[#777]">
            <Smile size={18} /><Scissors size={17} className="-rotate-90" />
            <svg width="18" height="14" viewBox="0 0 18 14"><rect x="1" y="1" width="16" height="12" fill="none" stroke="#777" strokeWidth="1.800" /><path d="M3 11V8L7 6L9 8L13 3.500L15 5V11Z" fill="#777" /></svg>
            <span className="flex-1" /><FaUserLock size={18} /><Settings size={17} />
          </div>
          <div className="mb-[5px] mr-[6px] mt-auto flex h-[24px] w-[80px] self-end rounded-[2px] bg-[#1c8ef0] text-[13px] font-bold leading-[24px] text-white">
            <span className="flex-1 pl-[2px] text-center">发 送</span>
            <span className="flex w-[24px] items-center justify-center border-l border-[#8cc8fa]"><span className="border-x-[3px] border-t-[5px] border-x-transparent border-t-white" /></span>
          </div>
        </div>
      </div>
    </div>
  );
}

/* ---------- overlays ---------- */

function NetWidget() {
  return (
    <div className="absolute left-[1749px] top-[744px] flex h-[50px] items-center">
      <div className="z-10 flex h-[48px] w-[48px] items-center justify-center rounded-full border-2 border-[#eee] bg-[linear-gradient(#128050_58%,#3fd058_58%)] font-['Liberation_Sans',sans-serif] text-[15px] tracking-[-0.5px] text-white shadow-[0_1px_4px_rgba(0,0,0,.6),inset_0_0_0_2px_#127848]">43%</div>
      <div className="-ml-[14px] flex h-[39px] w-[93px] items-center rounded-full border border-[#aaa] bg-[#efefef] pl-[17px] text-black shadow-md">
        <svg width="8" height="24" fill="none" strokeWidth="2"><path d="M4 9V2M1 4.500L4 1.500L7 4.500" stroke="#d84850" /><path d="M4 15V22M1 19.500L4 22.500L7 19.500" stroke="#209060" /></svg>
        <div className="w-[37px] text-right font-['Noto_Sans',sans-serif] text-[10px] leading-[14.500px] tracking-[-0.500px]">13.5K/s<br />2.8K/s</div>
        <svg className="ml-[6px]" width="19" height="20"><circle cx="9" cy="11" r="8.500" fill="#3580d8" /><path d="M9 6V16M4 11H14" stroke="#fff" strokeWidth="2" /><circle cx="14.500" cy="5" r="3.800" fill="#e82c30" /></svg>
      </div>
    </div>
  );
}

function ChatButton() {
  return (
    <div className="absolute left-[1718px] top-[810px] h-[144px] w-[144px] rounded-full bg-gradient-to-b from-[#3e90ff] to-[#1874ee] shadow-[0_6px_26px_rgba(0,0,0,.5)]">
      <svg width="144" height="144" viewBox="114 288 432 432" fill="#d3e5ff">
        <path d="M311 405 C368 405 408 439 408 483 C408 530 366 562 311 562 L294 561 C276 578 254 588 226 585 C242 573 250 560 249 545 C226 530 213 509 213 483 C213 439 254 405 311 405Z" />
        <path d="M424 477 C440 490 447 505 447 524 C447 546 436 563 415 575 C414 590 421 602 435 611 C412 612 391 605 378 590 C352 592 332 588 312 578 C380 575 424 540 424 477Z" />
      </svg>
    </div>
  );
}

function MeetingBar() {
  return (
    <div className={`absolute left-0 top-0 flex h-[17px] w-[454px] items-start overflow-hidden rounded-br-[5px] bg-[#3f4249] pl-[14px] text-[12px] leading-[7px] text-[#b4b6ba] ${SANS}`}>
      <span className="w-[57px]">答题卡</span><span className="w-[63px]">画中画</span><span className="w-[58px]">举手</span><span className="w-[56px]">预览</span><span className="w-[163px]">工具</span>
      <svg className="-mt-[7px]" width="20" height="20" fill="none" stroke="#b4b6ba" strokeWidth="2"><circle cx="10" cy="9" r="8" /><path d="M10 6V11" /></svg>
    </div>
  );
}

function TopStrip() {
  return (
    <div className={`absolute left-[450px] top-0 flex h-[14px] w-[1467px] items-start justify-end gap-[11px] overflow-hidden bg-gradient-to-b from-white via-[#ecedea] to-[#a8a8a4] pr-[5px] text-[12px] leading-[24px] ${SANS}`}>
      <span className="-mr-[4px] whitespace-nowrap font-medium text-[#d87020]">升级专业版 <span className="text-[8px] text-[#333]">▾</span></span>
      <svg className="-mr-[3px] mt-[7px]" width="15" height="14" fill="none" stroke="#444" strokeWidth="2"><path d="M1 8C1 0 14 0 14 8M4 8Q8 3 11 8" /></svg>
      <svg className="mt-[5px]" width="14" height="14" fill="#444" stroke="#444"><path d="M2 8L11 3M2 8L11 13" /><circle cx="11" cy="3" r="2" /><circle cx="2" cy="8" r="2" /></svg>
      <span className="text-[#1010c0]">登录</span>
      <svg className="-ml-[3px] mt-[6px]" width="15" height="14" fill="none" stroke="#444" strokeWidth="1.500"><path d="M7.500 13L2 7Q0 2 4 1.500Q7 1.500 7.500 4Q8 1.500 11 1.500Q15 2 13 7Z" /></svg>
      <span className="-ml-[4px] text-[8px]">▾</span>
      <svg className="mt-[5px]" width="15" height="14"><circle cx="7" cy="3" r="3" fill="#f0a020" /><circle cx="12" cy="6" r="3" fill="#e0b030" /><circle cx="2" cy="6" r="3" fill="#3080c0" /><circle cx="7" cy="10" r="3" fill="#50a060" /></svg>
      <svg className="mt-[8px]" width="12" height="8" fill="none" stroke="#333" strokeWidth="1.500"><path d="M1 7L6 1L11 7" /></svg>
    </div>
  );
}

export default function App() {
  return (
    <div className="flex h-[1080px] w-[1920px] flex-col overflow-hidden bg-black">
      <StatusBar />
      <div className="relative mt-[6px] h-[1008px] overflow-hidden bg-[#e8ecf2]">
        <Explorer />
        <EdrawWindow />
        <TopStrip />
        <PaintWindow />
        <ChatWindow />
        <MeetingBar />
        <NetWidget />
        <ChatButton />
        <div className="absolute right-0 top-0 h-full w-[3px] border-l border-[#e05060] bg-[#b4bcc8]" />
      </div>
    </div>
  );
}
